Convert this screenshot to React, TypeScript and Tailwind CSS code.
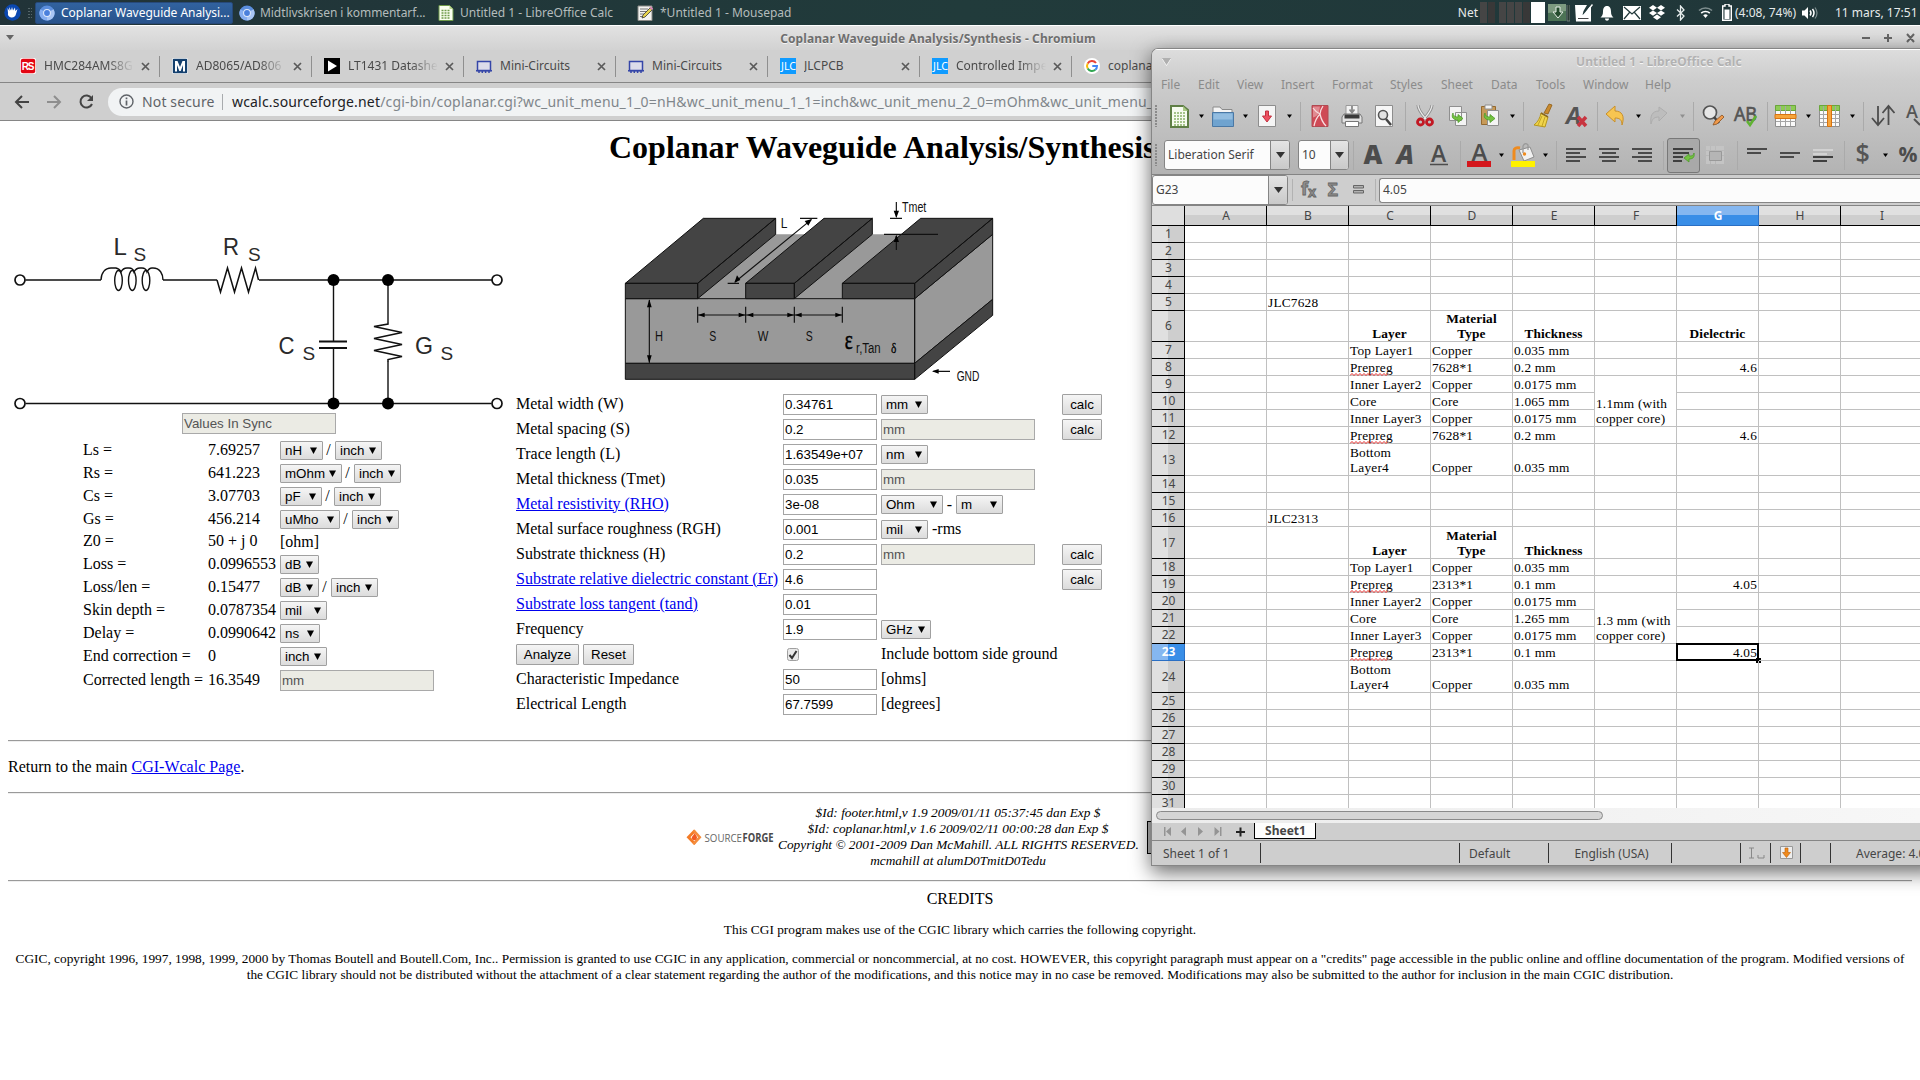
import React from "react";

const UI = "font-['Noto_Sans',sans-serif]";

/* ---------- top panel ---------- */

function ChromiumIcon() {
  return (
    <svg width="16" height="16" viewBox="0 0 16 16" className="shrink-0">
      <circle cx="8" cy="8" r="7.6" fill="#5b8ede" />
      <path d="M8 8 L14.6 4.2 A7.6 7.6 0 0 1 8 15.6z" fill="#a9c6f5" />
      <path d="M8 8 L1.4 4.2 A7.6 7.6 0 0 0 8 15.6z" fill="#86aef0" />
      <circle cx="8" cy="8" r="3.9" fill="#dfe9fb" />
      <circle cx="8" cy="8" r="2.9" fill="#4a80dc" />
    </svg>
  );
}

function CalcIcon() {
  return (
    <svg width="16" height="16" viewBox="0 0 16 16" className="shrink-0">
      <path d="M1 .5h10.500L15 4v11.500H1z" fill="#fafff0" stroke="#6f9a4a" />
      <path d="M11.500 .5V4H15z" fill="#b7d48e" />
      <path d="M3.500 5.500h9M3.500 8h9M3.500 10.500h9M3.500 13h9" stroke="#6f9a4a" strokeWidth="1.300" strokeDasharray="2 1" />
    </svg>
  );
}

function TopPanel() {
  return (
    <div className="flex h-[25px] items-center bg-gradient-to-r from-[#213338] via-[#213b3b] to-[#203639] text-[12px] text-[#b4bcbc]">
      <svg width="17" height="17" viewBox="0 0 17 17" className="ml-[4px] shrink-0">
        <circle cx="8.500" cy="8.500" r="8.200" fill="#0a47b0" />
        <path d="M3.500 4l2 3-.500-4 2 3.500L8 3l1 3.500 2-3 .300 3.500L13.500 5l-1.500 5c-.500 2.500-2.500 4-5 3.500C4.500 13 3.500 11 4 9z" fill="#fff" />
      </svg>
      <div className="ml-[7px] grid w-[4px] shrink-0 grid-cols-2 gap-x-px gap-y-[2px]">
        {[0, 1, 2, 3, 4, 5, 6, 7].map((i) => (
          <span key={i} className="h-px bg-[#55666a]" />
        ))}
      </div>
      <div className="ml-[3px] flex h-[22px] w-[198px] shrink-0 items-center rounded-[2px] border border-[#27497a] bg-gradient-to-b from-[#31629f] to-[#28538c] pl-[3px] text-white">
        <ChromiumIcon />
        <span className="ml-[6px] tracking-[-0.03px] whitespace-nowrap">Coplanar Waveguide Analysi...</span>
      </div>
      <div className="flex w-[199px] shrink-0 items-center pl-[6px]">
        <ChromiumIcon />
        <span className="ml-[5px] tracking-[-0.06px] whitespace-nowrap">Midtlivskrisen i kommentarf...</span>
      </div>
      <div className="flex w-[199px] shrink-0 items-center pl-[6px]">
        <CalcIcon />
        <span className="ml-[6px] whitespace-nowrap">Untitled 1 - LibreOffice Calc</span>
      </div>
      <div className="flex w-[200px] shrink-0 items-center pl-[6px]">
        <svg width="16" height="16" viewBox="0 0 16 16" className="shrink-0">
          <path d="M1 1h14v14.500H1z" fill="#f3f3f0" stroke="#8a8a86" />
          <path d="M3 4h8M3 6.500h9M3 9h5M3 11.500h4" stroke="#777" />
          <path d="M13 3l2 2-7 7-3 1 1-3z" fill="#e7d44c" stroke="#333" strokeWidth=".8" />
          <path d="M13 2l2.500 2.500" stroke="#d78ab0" strokeWidth="2" />
        </svg>
        <span className="ml-[7px] whitespace-nowrap">*Untitled 1 - Mousepad</span>
      </div>
      <div className="ml-auto flex h-full items-center text-[#e6eaea]">
        <span>Net</span>
        <div className="ml-[2px] flex h-[21px] items-stretch gap-px">
          <span className="w-[7px] bg-[#454545]" />
          <span className="w-[7px] bg-[#383838]" />
          <span className="ml-[3px] w-[7px] bg-[#454545]" />
          <span className="w-[7px] bg-[#454545]" />
          <span className="w-[7px] bg-[#454545]" />
          <span className="w-[7px] bg-[#383838]" />
          <span className="w-[14px] bg-white" />
        </div>
        <svg width="22" height="18" viewBox="0 0 22 18" className="ml-[3px]">
          <path d="M0 0h18v17H0z" fill="#4c7355" />
          <path d="M0 0h18v7L0 9z" fill="#7d9a80" />
          <path d="M8 3h4v5h3l-5 6-5-6h3z" fill="#234b2c" stroke="#e7efe7" />
          <path d="M19 1v16h3V1" fill="#2a3c36" stroke="#8a958f" strokeWidth=".7" />
        </svg>
        <svg width="18" height="18" viewBox="0 0 18 18" className="ml-[5px]">
          <path d="M0 1h12L8.500 7l-1 4 3-2 4-6H16v14.500H1z" fill="#fff" />
          <path d="M17.500 .5L9 11" stroke="#fff" strokeWidth="1.500" />
          <path d="M3 14.500h10.500" stroke="#444" />
        </svg>
        <svg width="14" height="16" viewBox="0 0 14 16" className="ml-[7px]">
          <path d="M7 1c3 0 4 2.500 4 5.500 0 3.500 1 4.500 2.500 6H.5C2 11 3 10 3 6.500 3 3.500 4 1 7 1zM5 13.500h4c0 3-4 3-4 0z" fill="#fff" />
        </svg>
        <svg width="18" height="14" viewBox="0 0 18 14" className="ml-[9px]">
          <path d="M0 0h18v14H0z" fill="#fff" />
          <path d="M1 1l8 7 8-7M1 13l5.500-6.500M17 13l-5.500-6.500" stroke="#22393b" strokeWidth="1.200" fill="none" />
        </svg>
        <svg width="18" height="16" viewBox="0 0 18 16" className="ml-[7px]">
          <path d="M5 0l4 2.700-4 2.700L1 2.700zM13 0l4 2.700-4 2.700-4-2.700zM5 5.400L9 8l-4 2.700L1 8zM13 5.400L17 8l-4 2.700L9 8zM9 9.500l4 2.700L9 15l-4-2.800z" fill="#fff" />
        </svg>
        <svg width="10" height="16" viewBox="0 0 10 16" className="ml-[10px]">
          <path d="M1 4.500l7 6.500-3.500 4V1L8 5l-7 6.500" stroke="#e8eeee" strokeWidth="1.300" fill="none" />
        </svg>
        <svg width="15" height="13" viewBox="0 0 15 13" className="ml-[12px]">
          <path d="M1 4.500a9.500 9.500 0 0 1 13 0" stroke="#7e8d8e" strokeWidth="1.600" fill="none" />
          <path d="M3.200 7.200a6.300 6.300 0 0 1 8.600 0" stroke="#fff" strokeWidth="1.600" fill="none" />
          <path d="M5.200 9.300a3.400 3.400 0 0 1 4.600 0L7.500 12z" fill="#fff" />
        </svg>
        <svg width="10" height="17" viewBox="0 0 10 17" className="ml-[9px]">
          <path d="M3 0h4v2h2.300v14.300H.7V2H3z" fill="none" stroke="#fff" strokeWidth="1.400" />
          <path d="M2.500 5.500h5v9.500h-5z" fill="#fff" />
        </svg>
        <span className="ml-[3px] w-[62px] whitespace-nowrap">(4:08, 74%)</span>
        <svg width="17" height="14" viewBox="0 0 17 14" className="ml-[5px]">
          <path d="M0 4.500h2.500L6 1v12L2.500 9.500H0z" fill="#fff" />
          <path d="M8 4.500q2 2.500 0 5" stroke="#fff" fill="none" strokeWidth="1.500" />
          <path d="M10.500 3q3 4 0 8" stroke="#fff" fill="none" strokeWidth="1.500" />
          <path d="M13 1.500q4 5.500 0 11" stroke="#7d8d8e" fill="none" strokeWidth="1.200" />
        </svg>
        <span className="mr-[4px] ml-[16px] w-[81px] whitespace-nowrap">11 mars, 17:51</span>
      </div>
    </div>
  );
}

/* ---------- browser chrome ---------- */

const miniIcon = (
  <svg width="16" height="16" viewBox="0 0 16 16">
    <path d="M1.500 3.500h13v9h-13z" fill="#dcdcea" stroke="#3546a8" strokeWidth="1.500" />
    <path d="M0 12.700h16M3 13v2M6.300 13v2M9.600 13v2M13 13v2" stroke="#3546a8" strokeWidth="1.500" />
  </svg>
);

const jlcIcon = (
  <svg width="16" height="16" viewBox="0 0 16 16">
    <path d="M0 0h16v16H0z" fill="#0f9bff" />
    <text x="1" y="12" fontSize="10" fill="#fff" fontFamily="Noto Sans" textLength="15" lengthAdjust="spacingAndGlyphs">JLC</text>
  </svg>
);

const tabs: { title: string; fade?: boolean; icon: React.ReactNode }[] = [
  {
    title: "HMC284AMS8G",
    fade: true,
    icon: (
      <svg width="16" height="16" viewBox="0 0 16 16">
        <rect width="16" height="16" rx="2" fill="#fff" />
        <rect x=".8" y=".8" width="14.400" height="14.400" rx="2" fill="#e30613" />
        <text x="1.800" y="12" fontSize="10" fontWeight="700" fill="#fff" fontFamily="Liberation Sans" textLength="12.500">RS</text>
      </svg>
    ),
  },
  {
    title: "AD8065/AD806",
    fade: true,
    icon: (
      <svg width="16" height="16" viewBox="0 0 16 16">
        <rect width="16" height="16" rx="2" fill="#fff" />
        <rect x=".8" y=".8" width="14.400" height="14.400" rx="1" fill="#14406e" />
        <path d="M3 3h2.500L8 9l2.500-6H13v10.500h-2V7l-2.300 6H7.300L5 7v6.500H3z" fill="#fff" />
      </svg>
    ),
  },
  {
    title: "LT1431 Datashe",
    fade: true,
    icon: (
      <svg width="16" height="16" viewBox="0 0 16 16">
        <path d="M0 0h16v16H0z" />
        <path d="M4 2.500L13 8l-9 5.500z" fill="#fff" />
      </svg>
    ),
  },
  { title: "Mini-Circuits", icon: miniIcon },
  { title: "Mini-Circuits", icon: miniIcon },
  { title: "JLCPCB", icon: jlcIcon },
  { title: "Controlled Impe", fade: true, icon: jlcIcon },
  {
    title: "coplanar",
    icon: (
      <svg width="16" height="16" viewBox="0 0 16 16">
        <circle cx="8" cy="8" r="8" fill="#fff" />
        <path d="M12 5A5 5 0 0 0 3.700 5.500" stroke="#ea4335" strokeWidth="2" fill="none" />
        <path d="M3.700 5.500a5 5 0 0 0 0 5" stroke="#fbbc05" strokeWidth="2" fill="none" />
        <path d="M3.700 10.500a5 5 0 0 0 7.600 1.300" stroke="#34a853" strokeWidth="2" fill="none" />
        <path d="M11.300 11.800A5 5 0 0 0 13 8H8.300" stroke="#4285f4" strokeWidth="2" fill="none" />
      </svg>
    ),
  },
];

function BrowserChrome() {
  return (
    <div className="text-[#4a4a4a]">
      <div className="flex h-[25px] items-center border-t border-white bg-gradient-to-b from-[#e2e2e2] to-[#d2d2d2]">
        <div className="w-[16px] pl-[6px]">
          <svg width="8" height="6" viewBox="0 0 8 6">
            <path d="M0 0h8L4 5z" fill="#666" />
          </svg>
        </div>
        <span className="flex-1 pt-px text-center text-[12px] font-bold tracking-[0.1px] text-[#6e6e6e] [text-shadow:0_1px_0_#f4f4f4]">Coplanar Waveguide Analysis/Synthesis - Chromium</span>
        <svg width="56" height="12" viewBox="0 0 56 12" className="mr-[4px]" stroke="#666" strokeWidth="2">
          <path d="M2 6h8M24 6h8M28 2v8M47 2l7 8M54 2l-7 8" />
        </svg>
      </div>
      <div className="flex h-[32px] items-center overflow-hidden bg-[#d0d0d0] pl-[8px]">
        {tabs.map((t, i) => (
          <div key={i} className="flex h-full w-[152px] shrink-0 items-center pl-[12px]">
            <span className="w-[24px] shrink-0">{t.icon}</span>
            <span
              className={
                t.fade
                  ? "w-[90px] overflow-hidden text-[12px] whitespace-nowrap [mask-image:linear-gradient(to_right,#000_70%,transparent)]"
                  : "w-[90px] overflow-hidden text-[12px] whitespace-nowrap"
              }
            >
              {t.title}
            </span>
            <svg width="9" height="9" viewBox="0 0 9 9" className="ml-[7px]" stroke="#5a5a5a" strokeWidth="1.700">
              <path d="M1 1l7 7M8 1l-7 7" />
            </svg>
            <span className="ml-auto h-[21px] w-px bg-[#8f8f8f]" />
          </div>
        ))}
      </div>
      <div className="flex h-[39px] items-center border-y border-[#868686] bg-[#cfcfcf]">
        <svg width="98" height="16" viewBox="0 0 98 16" className="ml-[10px] shrink-0" fill="none" strokeWidth="2">
          <path d="M19 8H6M12 2L6 8l6 6" stroke="#444" />
          <path d="M37 8h13M44 2l6 6-6 6" stroke="#8e8e8e" />
          <path d="M81.500 4.200A6 6 0 1 0 82 10" stroke="#444" />
          <path d="M83 1v6h-6z" fill="#444" />
        </svg>
        <div className="flex h-[28px] w-[1700px] shrink-0 items-center rounded-full bg-[#f1f3f4] pl-[11px]">
          <svg width="15" height="15" viewBox="0 0 15 15" fill="none" stroke="#5f6368">
            <circle cx="7.500" cy="7.500" r="6.500" strokeWidth="1.400" />
            <path d="M7.500 3.500v1.700M7.500 6.500v5" strokeWidth="1.700" />
          </svg>
          <span className="ml-[8px] w-[72px] text-[14px] tracking-[0.14px] whitespace-nowrap text-[#5f6368]">Not secure</span>
          <span className="ml-[8px] h-[16px] w-px bg-[#a8abae]" />
          <span className="ml-[9px] text-[14px] tracking-[0.18px] whitespace-nowrap text-[#80868b]">
            <span className="text-[#202124]">wcalc.sourceforge.net</span>
            /cgi-bin/coplanar.cgi?wc_unit_menu_1_0=nH&amp;wc_unit_menu_1_1=inch&amp;wc_unit_menu_2_0=mOhm&amp;wc_unit_menu_2_1=inch
          </span>
        </div>
      </div>
    </div>
  );
}

/* ---------- web page ---------- */

const control = "font-['Liberation_Sans',sans-serif] text-[13.333px]";

function Select({ label, w }: { label: string; w: string }) {
  return (
    <button className={`flex h-[19px] shrink-0 items-center justify-between rounded-[1px] border border-[#a0a0a0] bg-gradient-to-b from-[#f5f5f5] to-[#dcdcdc] pr-[5px] pl-[4px] leading-none text-black ${control} ${w}`}>
      <span>{label}</span>
      <svg width="7" height="7" viewBox="0 0 7 7" className="-mt-px">
        <path d="M0 .5h7L3.500 7z" />
      </svg>
    </button>
  );
}

function Disabled({ value }: { value: string }) {
  return <div className={`flex h-[21px] w-[154px] shrink-0 items-center border border-[#a9a9a9] bg-[#ebebe4] pl-[1px] leading-none text-[#545454] ${control}`}>{value}</div>;
}

function Button({ label, w }: { label: string; w: string }) {
  return <button className={`flex h-[21px] shrink-0 items-center justify-center rounded-[1px] border border-[#a0a0a0] bg-gradient-to-b from-[#f5f5f5] to-[#dcdcdc] leading-none text-black ${control} ${w}`}>{label}</button>;
}

const results: { name: string; value: string; units: React.ReactNode; h?: string }[] = [
  { name: "Ls =", value: "7.69257", units: <><Select label="nH" w="w-[43px]" /><Slash /><Select label="inch" w="w-[47px]" /></> },
  { name: "Rs =", value: "641.223", units: <><Select label="mOhm" w="w-[62px]" /><Slash /><Select label="inch" w="w-[47px]" /></> },
  { name: "Cs =", value: "3.07703", units: <><Select label="pF" w="w-[42px]" /><Slash /><Select label="inch" w="w-[47px]" /></> },
  { name: "Gs =", value: "456.214", units: <><Select label="uMho" w="w-[60px]" /><Slash /><Select label="inch" w="w-[47px]" /></> },
  { name: "Z0 =", value: "50 + j 0", units: <span className="-mt-px">[ohm]</span>, h: "h-[22px]" },
  { name: "Loss =", value: "0.0996553", units: <Select label="dB" w="w-[39px]" /> },
  { name: "Loss/len =", value: "0.15477", units: <><Select label="dB" w="w-[39px]" /><Slash /><Select label="inch" w="w-[47px]" /></> },
  { name: "Skin depth =", value: "0.0787354", units: <Select label="mil" w="w-[47px]" /> },
  { name: "Delay =", value: "0.0990642", units: <Select label="ns" w="w-[40px]" /> },
  { name: "End correction =", value: "0", units: <Select label="inch" w="w-[47px]" /> },
  { name: "Corrected length =", value: "16.3549", units: <Disabled value="mm" />, h: "h-[25px]" },
];

function Slash() {
  return <span className="-mt-[2px] w-[12px] pr-px text-center">/</span>;
}

const mm = (
  <div className="w-[154px]">
    <Disabled value="mm" />
  </div>
);

const params: { name: string; link?: boolean; value: string; unit?: React.ReactNode; calc?: boolean }[] = [
  { name: "Metal width (W)", value: "0.34761", unit: <Select label="mm" w="w-[47px]" />, calc: true },
  { name: "Metal spacing (S)", value: "0.2", unit: mm, calc: true },
  { name: "Trace length (L)", value: "1.63549e+07", unit: <Select label="nm" w="w-[47px]" /> },
  { name: "Metal thickness (Tmet)", value: "0.035", unit: mm },
  { name: "Metal resistivity (RHO)", link: true, value: "3e-08", unit: <><Select label="Ohm" w="w-[62px]" /><span className="w-[13px] text-center">-</span><Select label="m" w="w-[47px]" /></> },
  { name: "Metal surface roughness (RGH)", value: "0.001", unit: <><Select label="mil" w="w-[47px]" /><span className="-mt-px ml-[4px]">-rms</span></> },
  { name: "Substrate thickness (H)", value: "0.2", unit: mm, calc: true },
  { name: "Substrate relative dielectric constant (Er)", link: true, value: "4.6", calc: true },
  { name: "Substrate loss tangent (tand)", link: true, value: "0.01" },
  { name: "Frequency", value: "1.9", unit: <Select label="GHz" w="w-[50px]" /> },
  { name: "", value: "" },
  { name: "Characteristic Impedance", value: "50", unit: <span className="-mt-px">[ohms]</span> },
  { name: "Electrical Length", value: "67.7599", unit: <span className="-mt-px">[degrees]</span> },
];

function Circuit() {
  const t = { fontFamily: "Liberation Sans", fill: "#2a2a2a", stroke: "none" };
  return (
    <svg width="516" height="182" viewBox="0 230 516 182" fill="none" stroke="#111" strokeWidth="1.400">
      <path d="M25.500 280H101M163 280h54M259 280h233M25.500 403.500h466M333.500 280v61.500M333.500 348v55.500M388 280v42M388 361v42.500" />
      <path d="M319 341.500h28M319 348h28" strokeWidth="1.800" />
      <path d="M101 280c0-7 4-12 10-12h5q4 1 5 4 2-4 6-4h2q4 0 5 4 2-4 6-4h2q4 0 5 4 2-4 5-4h1c7 0 10 6 10 12" />
      <ellipse cx="118.500" cy="280.500" rx="3.800" ry="10" />
      <ellipse cx="132.300" cy="280.500" rx="3.800" ry="10" />
      <ellipse cx="146" cy="280.500" rx="3.800" ry="10" />
      <path d="M217 280l3.500 12 7-24 7 24 7-24 7 24 7-24 3 12" strokeWidth="1.500" />
      <path d="M388 322v2l-14 2.500 28 6-28 6 28 6-28 6 28 6-14 3v2" strokeWidth="1.500" />
      <g fill="#fff" strokeWidth="1.700">
        <circle cx="20" cy="280" r="5" />
        <circle cx="497" cy="280" r="5" />
        <circle cx="20" cy="403.500" r="5" />
        <circle cx="497" cy="403.500" r="5" />
      </g>
      <g fill="#000" stroke="none">
        <circle cx="333.500" cy="280" r="6" />
        <circle cx="388" cy="280" r="6" />
        <circle cx="333.500" cy="403.500" r="6" />
        <circle cx="388" cy="403.500" r="6" />
      </g>
      <g fontSize="24" {...t}>
        <text x="113.500" y="255">L</text>
        <text x="223" y="255" textLength="16" lengthAdjust="spacingAndGlyphs">R</text>
        <text x="278.500" y="353.500" textLength="16" lengthAdjust="spacingAndGlyphs">C</text>
        <text x="415" y="353.500" textLength="18" lengthAdjust="spacingAndGlyphs">G</text>
      </g>
      <g fontSize="19" {...t}>
        <text x="133.500" y="260.500">S</text>
        <text x="248" y="260.500">S</text>
        <text x="302.500" y="359.500">S</text>
        <text x="440.500" y="359.500">S</text>
      </g>
    </svg>
  );
}

function Label({ x, y, w, size = 44, children }: { x: number; y: number; w: number; size?: number; children: string }) {
  return (
    <text x={x} y={y} fontSize={size} textLength={w} lengthAdjust="spacingAndGlyphs" fontFamily="Liberation Sans" fill="#111" stroke="none">
      {children}
    </text>
  );
}

function Waveguide() {
  return (
    <svg width="420" height="198" viewBox="0 30 1260 594" stroke="#111" strokeWidth="3" strokeLinejoin="round">
      <g fill="#999">
        <path d="M76 356L310 163H1178L944 356z" stroke="none" />
        <path d="M76 356H944V550H76zM944 356L1178 163V358L944 550z" />
      </g>
      <g fill="#444">
        <path d="M76 550H944V598H76zM944 550L1178 358V406L944 598z" />
        <path d="M76 310L310 115H527L293 310zM76 310H293V356H76zM293 310L527 115V163L293 356z" />
        <path d="M437 310L672 115H817L583 310zM437 310H583V356H437zM583 310L817 115V163L583 356z" />
        <path d="M727 310L962 115H1178L944 310zM727 310H944V356H727zM944 310L1178 115V163L944 356z" />
      </g>
      <path d="M148 360V548M293 380V428M437 380V428M583 380V428M727 380V428M295 405H725M383 310H417M600 115H652M405 306L634 119M889 66V110M870 115H906M852 163H1014M889 168V210M1050 574H1000" fill="none" strokeWidth="3.500" />
      <g fill="#000" stroke="none">
        <path d="M148 358l-7 24h14zM148 550l-7-24h14zM294 405l20-7v14zM436 405l-20-7v14zM440 405l20-7v14zM582 405l-20-7v14zM585 405l20-7v14zM726 405l-20-7v14z" />
        <path d="M403 308l8-22 10 14zM636 117l-22 6 11 14zM889 114l-8-22h16zM889 164l-8 22h16zM996 574l20-7v14z" />
      </g>
      <Label x={542} y={145} w={20}>L</Label>
      <Label x={906} y={96} w={73}>Tmet</Label>
      <Label x={165} y={483} w={24}>H</Label>
      <Label x={328} y={483} w={21}>S</Label>
      <Label x={473} y={483} w={32}>W</Label>
      <Label x={617} y={483} w={21}>S</Label>
      <text x="734" y="506" fontSize="80" textLength="24" lengthAdjust="spacingAndGlyphs" fontFamily="Liberation Serif" fill="#000" stroke="#000" strokeWidth="1.500">ε</text>
      <Label x={768} y={518} w={74}>r,Tan</Label>
      <text x="873" y="520" fontSize="42" textLength="16" lengthAdjust="spacingAndGlyphs" fontFamily="Liberation Serif" fill="#000" stroke="#000" strokeWidth=".8">δ</text>
      <Label x={1070} y={602} w={68}>GND</Label>
    </svg>
  );
}

function Rule() {
  return <div className="mx-[8px] h-[2px] border-t border-b border-t-[#9a9a9a] border-b-[#eeeeee]" />;
}

function Page() {
  return (
    <div className="font-['Liberation_Serif',serif] text-[16px] leading-[18px] text-black">
      <h1 className="flex h-[52px] items-center pl-[609px] text-[32px] leading-none font-bold whitespace-nowrap">Coplanar Waveguide Analysis/Synthesis</h1>
      <div className="mt-[3px] flex h-[564px]">
        <div className="w-[516px] pt-[54px]">
          <Circuit />
          <div className="mt-[1px] mb-[5px] ml-[182px]">
            <Disabled value="Values In Sync" />
          </div>
          {results.map((r) => (
            <div key={r.name} className={`flex items-center whitespace-nowrap ${r.h ?? "h-[23px]"}`}>
              <span className="-mt-[2px] ml-[83px] w-[125px]">{r.name}</span>
              <span className="-mt-[2px] w-[72px]">{r.value}</span>
              <div className="flex items-center">{r.units}</div>
            </div>
          ))}
        </div>
        <div className="pt-[14px]">
          <div className="ml-[84px] h-[202px]">
            <Waveguide />
          </div>
          {params.map((p) =>
            p.name ? (
              <div key={p.name} className="flex h-[25px] w-[586px] items-center whitespace-nowrap">
                <span className={p.link ? "-mt-[2px] w-[267px] text-[#0000ee] underline" : "-mt-[2px] w-[267px]"}>{p.name}</span>
                <div className={`flex h-[21px] w-[94px] items-center border border-[#a4a4a4] bg-white pl-[1px] leading-none ${control}`}>{p.value}</div>
                <div className="ml-[4px] flex items-center">{p.unit}</div>
                {p.calc && (
                  <div className="ml-auto">
                    <Button label="calc" w="w-[40px]" />
                  </div>
                )}
              </div>
            ) : (
              <div key="actions" className="flex h-[25px] items-center whitespace-nowrap">
                <Button label="Analyze" w="w-[63px]" />
                <div className="w-[4px]" />
                <Button label="Reset" w="w-[51px]" />
                <svg width="12" height="13" viewBox="0 0 12 13" className="ml-[153px]">
                  <rect x=".5" y=".5" width="11" height="12" rx="2" fill="#e9e9e9" stroke="#a0a0a0" />
                  <path d="M2.500 7l2.500 3 4.500-7" fill="none" stroke="#333" strokeWidth="2" />
                </svg>
                <span className="-mt-[2px] ml-[82px]">Include bottom side ground</span>
              </div>
            ),
          )}
        </div>
      </div>
      <Rule />
      <p className="flex h-[50px] items-center pl-[8px]">
        Return to the main&nbsp;<span className="text-[#0000ee] underline">CGI-Wcalc Page</span>.
      </p>
      <Rule />
      <div className="flex h-[86px] items-center justify-center text-[13.333px] leading-[16px] italic">
        <div className="flex w-[92px] items-center not-italic">
          <svg width="88" height="17" viewBox="0 0 88 17">
            <path d="M8 .5L.5 8.300 8 16l2-2-5.500-5.700L10 2.500z" fill="#f47b26" />
            <path d="M8.500 .5l7 7.800-7 7.700-2-2 5.500-5.700L7 2.500z" fill="#f58d3d" />
            <path d="M8.500 4c2 2.500 2.500 3.500 2.500 5a2.700 2.700 0 0 1-5.300 0C5.700 7 8 6.500 8.500 4z" fill="#f15a22" />
            <text x="18.500" y="12.600" fontSize="11.500" fontFamily="Open Sans" fill="#666" textLength="37.500" lengthAdjust="spacingAndGlyphs">SOURCE</text>
            <text x="56.500" y="12.600" fontSize="11.500" fontWeight="700" fontFamily="Open Sans" fill="#4a4a4a" textLength="31" lengthAdjust="spacingAndGlyphs">FORGE</text>
          </svg>
        </div>
        <div className="w-[360px] text-center whitespace-nowrap">
          <p>$Id: footer.html,v 1.9 2009/01/11 05:37:45 dan Exp $</p>
          <p>$Id: coplanar.html,v 1.6 2009/02/11 00:00:28 dan Exp $</p>
          <p>Copyright © 2001-2009 Dan McMahill. ALL RIGHTS RESERVED.</p>
          <p>mcmahill at alumD0TmitD0Tedu</p>
        </div>
        <div className="ml-[9px] h-[33px] w-[87px] border border-black bg-[#bbb]" />
      </div>
      <Rule />
      <div className="px-[8px] text-center text-[13.333px] leading-[16px]">
        <p className="pt-[8px] text-[16px] leading-[18px]">CREDITS</p>
        <p className="pt-[14px]">This CGI program makes use of the CGIC library which carries the following copyright.</p>
        <p className="pt-[13px]">
          CGIC, copyright 1996, 1997, 1998, 1999, 2000 by Thomas Boutell and Boutell.Com, Inc.. Permission is granted to use CGIC in any application, commercial or noncommercial, at no cost. HOWEVER, this copyright paragraph must appear on a "credits" page accessible in the public online and offline documentation of the program. Modified versions of the CGIC library should not be distributed without the attachment of a clear statement regarding the author of the modifications, and this notice may in no case be removed. Modifications may also be submitted to the author for inclusion in the main CGIC distribution.
        </p>
      </div>
    </div>
  );
}

/* ---------- spreadsheet window ---------- */

function Ico({ ml, children }: { ml: string; children: React.ReactNode }) {
  return (
    <svg width="24" height="24" viewBox="0 0 24 24" fill="none" className={`shrink-0 overflow-visible ${ml}`}>
      {children}
    </svg>
  );
}

function Arrow({ ml, dim }: { ml: string; dim?: boolean }) {
  return (
    <svg width="7" height="5" viewBox="0 0 7 5" className={`shrink-0 ${ml}`}>
      <path d="M1 0.500h5L3.500 4z" fill={dim ? "#8f8f8f" : "#000"} />
    </svg>
  );
}

function Sep({ ml }: { ml: string }) {
  return <span className={`h-[29px] w-px shrink-0 bg-[#aaaaaa] ${ml}`} />;
}

function Handle() {
  return <span className="ml-[3px] h-[22px] w-[2px] shrink-0 bg-[repeating-linear-gradient(to_bottom,#8a8a8a_0_2px,transparent_2px_3px)]" />;
}

const green = "#4e9a2a";

function ToolbarOne() {
  return (
    <div className="flex h-[40px] items-center overflow-hidden">
      <Handle />
      <Ico ml="ml-[10px]">
        <path d="M4 2h12l5 4v17H4z" fill="#f6fbef" stroke="#5f7f45" strokeWidth="2" />
        <path d="M16 2v5h5z" fill="#a8c884" />
        <path d="M7 9h12M7 12h12M7 15h12M7 18h12M7 21h12" stroke="#8ab36a" strokeWidth="1.300" strokeDasharray="2 1" />
      </Ico>
      <Arrow ml="ml-[7px]" />
      <Ico ml="ml-[6px]">
        <path d="M2 20V3h7l2 2.500h10V10" fill="#f4f4f4" stroke="#8b8b8b" />
        <path d="M1.500 8.500h21v14h-21z" fill="#6fa3cf" stroke="#4a78a5" />
        <path d="M2.500 9.500h19v6h-19z" fill="#93bde0" />
      </Ico>
      <Arrow ml="ml-[7px]" />
      <Ico ml="ml-[6px]">
        <path d="M3.500 1.500h17v21h-17z" fill="#f5f5f5" stroke="#8d8d8d" />
        <path d="M10.500 7h3v5h3l-4.500 6-4.500-6h3z" fill="#ec5060" stroke="#c2303f" />
      </Ico>
      <Arrow ml="ml-[7px]" />
      <Sep ml="ml-[7px]" />
      <Ico ml="ml-[7px]">
        <path d="M4 1.500h16v21H4z" fill="#cf4a56" stroke="#b04a52" />
        <path d="M5 2.500h7c-1 8-3 10-7 11z" fill="#e08a91" />
        <path d="M5 4c2 3 5 5 7 6 0-3 1-5 3-8M12 10c-3 3-5 7-6 12M12 10c1 5 3 9 6 12" stroke="#f7dcde" strokeWidth="1.300" />
      </Ico>
      <Ico ml="ml-[8px]">
        <path d="M6 1.500h12v9H6z" fill="#f2f2f2" stroke="#999" />
        <path d="M12 2v5M9.500 5.500l2.500 3 2.500-3" stroke="#888" strokeWidth="1.800" />
        <path d="M4 10h16l2 3v6H2v-6z" fill="#e2e2e2" stroke="#777" />
        <path d="M4.500 10.500h15v4h-15z" fill="#3a3a3a" />
        <path d="M5.500 17.500h13v5h-13z" fill="#fff" stroke="#777" />
      </Ico>
      <Ico ml="ml-[8px]">
        <path d="M3.500 1.500h17v21h-17z" fill="#f6f6f6" stroke="#8d8d8d" />
        <circle cx="11" cy="11" r="4.500" fill="#e3e3e3" stroke="#555" strokeWidth="1.600" />
        <path d="M14 15l5 6" stroke="#444" strokeWidth="2.500" />
      </Ico>
      <Sep ml="ml-[9px]" />
      <Ico ml="ml-[7px]">
        <path d="M5 1c0 5 4 9 8 14M19 1c0 5-4 9-8 14" stroke="#8d8d8d" strokeWidth="3" />
        <path d="M5 1c0 5 4 9 8 14M19 1c0 5-4 9-8 14" stroke="#e8e8e8" strokeWidth="1.300" />
        <circle cx="7.500" cy="18" r="3" stroke="#c21823" strokeWidth="2.800" />
        <circle cx="16.500" cy="18" r="3" stroke="#c21823" strokeWidth="2.800" />
      </Ico>
      <Ico ml="ml-[9px]">
        <path d="M3.500 2.500h12v14h-12zM9.500 8.500h11v13h-11z" fill="#f4f4f4" stroke="#8f8f8f" />
        <path d="M7 9c0 3 2 4 5 4v-2.500l5 4-5 4V16c-5 0-7-3-5-7z" fill="#73c240" stroke={green} strokeWidth=".8" />
      </Ico>
      <Ico ml="ml-[8px]">
        <path d="M3.500 2.500h14v18h-14z" fill="#c79a58" stroke="#94692f" />
        <path d="M7 1h7v4H7zM9.500 6.500h11v15h-11z" fill="#f4f4f4" stroke="#8f8f8f" />
        <path d="M7 9c0 3 2 4 5 4v-2.500l5 4-5 4V16c-5 0-7-3-5-7z" fill="#73c240" stroke={green} strokeWidth=".8" />
      </Ico>
      <Arrow ml="ml-[7px]" />
      <Sep ml="ml-[7px]" />
      <Ico ml="ml-[6px]">
        <path d="M19 0l3 1-4 9-4-1z" fill="#c98a2e" stroke="#8e5d15" strokeWidth=".8" />
        <path d="M11 9l7 4-3 10-11-2C8 18 10 14 11 9z" fill="#f0d44b" stroke="#b5961c" />
        <path d="M12 12l-4 9M15 13l-3 9" stroke="#c2a325" />
        <path d="M11 9l7 4" stroke="#8b6a20" strokeWidth="1.500" />
      </Ico>
      <Ico ml="ml-[11px]">
        <text x="1" y="20" fontSize="24" fontWeight="700" fontStyle="italic" fontFamily="Open Sans" fill="#555">A</text>
        <path d="M13 13l8 9M21 13l-8 9" stroke="#c83540" strokeWidth="3.500" />
      </Ico>
      <Sep ml="ml-[8px]" />
      <Ico ml="ml-[5px]">
        <path d="M3 10l9-8v5c7 0 10 5 7 14 0-5-2-7-7-7v4z" fill="#f7c551" stroke="#c9902a" />
      </Ico>
      <Arrow ml="ml-[8px]" />
      <Ico ml="ml-[5px]">
        <path d="M20 9l-8-6v4C5 7 3 12 4 20c1-5 3-7 8-7v4z" fill="#bdbdbd" stroke="#adadad" />
      </Ico>
      <Arrow ml="ml-[8px]" dim />
      <Sep ml="ml-[7px]" />
      <Ico ml="ml-[7px]">
        <circle cx="9" cy="8.500" r="6.500" fill="#e6e6e6" stroke="#555" strokeWidth="1.700" />
        <path d="M13 13l5 6" stroke="#444" strokeWidth="2.500" />
        <path d="M12 21l2-4 7-6 2 2-7 7z" fill="#ef9a4c" stroke="#8a5120" strokeWidth=".8" />
      </Ico>
      <Ico ml="ml-[9px]">
        <text x="0" y="16.500" fontSize="20" fontFamily="Open Sans" stroke="#555" strokeWidth=".7" fill="#555" textLength="23" lengthAdjust="spacingAndGlyphs">AB</text>
        <path d="M13 17l3 4 6-9" stroke="#5fb232" strokeWidth="2.500" />
      </Ico>
      <Sep ml="ml-[9px]" />
      <Ico ml="ml-[5px]">
        <path d="M2.500 1.500h20v21h-20z" fill="#fafafa" stroke="#8f8f8f" />
        <path d="M2.500 1.500h20v5h-20z" fill="#8dcb55" stroke="#6aa63a" />
        <path d="M7.500 2v20M12.500 2v20M17.500 2v20M3 17.500h20" stroke="#a5a5a5" />
        <path d="M2 10.500h21v4H2z" fill="#f6a53c" stroke="#d9730f" />
      </Ico>
      <Arrow ml="ml-[8px]" />
      <Ico ml="ml-[5px]">
        <path d="M2.500 1.500h20v21h-20z" fill="#fafafa" stroke="#8f8f8f" />
        <path d="M2.500 1.500h20v5h-20z" fill="#8dcb55" stroke="#6aa63a" />
        <path d="M6.500 2v20M18.500 2v20M3 10.500h20M3 14.500h20M3 18.500h20" stroke="#a5a5a5" />
        <path d="M10.500 1.500h4v21h-4z" fill="#f6a53c" stroke="#d9730f" />
      </Ico>
      <Arrow ml="ml-[8px]" />
      <Sep ml="ml-[7px]" />
      <Ico ml="ml-[7px]">
        <path d="M7 2v18M1 14l6 7 6-7M17.500 21V3M11.500 9l6-7 6 7" stroke="#4d4d4d" strokeWidth="1.800" />
      </Ico>
      <Ico ml="ml-[11px]">
        <text x="0" y="14" fontSize="18" fontWeight="600" fontFamily="Open Sans" fill="#555">A</text>
        <path d="M8 15l6 6" stroke="#555" strokeWidth="2" />
      </Ico>
    </div>
  );
}

function Combo({ value, cls, arrowW }: { value: string; cls: string; arrowW: string }) {
  return (
    <div className={`flex h-[30px] shrink-0 items-stretch overflow-hidden rounded-[3px] border border-[#858585] bg-[#fcfcfc] ${cls}`}>
      <span className="flex flex-1 items-center pl-[3px]">{value}</span>
      <span className={`flex items-center justify-center border-l border-[#858585] bg-gradient-to-b from-[#e4e4e4] to-[#c9c9c9] ${arrowW}`}>
        <svg width="9" height="6" viewBox="0 0 9 6">
          <path d="M0 0h9L4.500 6z" fill="#333" />
        </svg>
      </span>
    </div>
  );
}

function BoldA({ ml, italic, line }: { ml: string; italic?: boolean; line?: boolean }) {
  return (
    <Ico ml={ml}>
      <text x={line ? 4 : 2.5} y={line ? 19 : 21} fontSize={line ? 23 : 26} fontWeight={line ? 600 : 800} fontStyle={italic ? "italic" : "normal"} fontFamily="Open Sans" fill="#4c4c4c">
        A
      </text>
      {line && <path d="M3 21.500h18" stroke="#4c4c4c" strokeWidth="1.300" />}
    </Ico>
  );
}

function ToolbarTwo() {
  return (
    <div className="flex h-[38px] items-center overflow-hidden">
      <Handle />
      <Combo value="Liberation Serif" cls="ml-[7px] w-[126px]" arrowW="w-[19px]" />
      <Combo value="10" cls="ml-[8px] w-[51px]" arrowW="w-[18px]" />
      <Sep ml="ml-[4px]" />
      <BoldA ml="ml-[7px]" />
      <BoldA ml="ml-[9px]" italic />
      <BoldA ml="ml-[9px]" line />
      <Sep ml="ml-[9px]" />
      <Ico ml="ml-[6px]">
        <text x="4.500" y="18" fontSize="24" fontWeight="600" fontFamily="Open Sans" fill="#4c4c4c">A</text>
        <path d="M0 18h24v6H0z" fill="#d4161c" />
      </Ico>
      <Arrow ml="ml-[7px]" />
      <Ico ml="ml-[6px]">
        <path d="M3 17V8q0-4 6-3" stroke="#ef8b1f" strokeWidth="3" />
        <path d="M8 7l11-3 4 10-10 4z" fill="#f1f1f1" stroke="#8d8d8d" />
        <path d="M12 10V3q2-4 5-1v5" stroke="#9a9a9a" strokeWidth="1.300" />
        <circle cx="13.500" cy="11" r="1.700" fill="#ef8b1f" />
        <path d="M0 18h24v6H0z" fill="#fff200" />
      </Ico>
      <Arrow ml="ml-[7px]" />
      <Sep ml="ml-[7px]" />
      <Ico ml="ml-[7px]">
        <path d="M2 6h20M2 10h14M2 14h20M2 18h14" stroke="#4a4a4a" strokeWidth="1.800" />
      </Ico>
      <Ico ml="ml-[9px]">
        <path d="M2 6h20M5 10h14M2 14h20M5 18h14" stroke="#4a4a4a" strokeWidth="1.800" />
      </Ico>
      <Ico ml="ml-[9px]">
        <path d="M2 6h20M8 10h14M2 14h20M8 18h14" stroke="#4a4a4a" strokeWidth="1.800" />
      </Ico>
      <Sep ml="ml-[9px]" />
      <div className="ml-[3px] flex h-[35px] w-[33px] shrink-0 items-center justify-center rounded-[3px] border border-[#787878] bg-[#a9a9a9]">
        <Ico ml="ml-0">
          <path d="M1 6h20M1 10h16M1 14h10M1 18h9" stroke="#3f3f3f" strokeWidth="1.800" />
          <path d="M22 10c1 5-2 6-5 6v3l-5-4 5-4v2c3 0 4 0 5-3z" fill="#73c240" stroke={green} strokeWidth=".8" />
        </Ico>
      </div>
      <Ico ml="ml-[3px]">
        <path d="M3 5h18M3 19h18M5 3v18M19 3v18" stroke="#c4c4c4" strokeWidth="4" strokeDasharray="4 1" />
        <path d="M6.500 8.500h12v9h-12z" fill="#b5b5b5" stroke="#999" />
      </Ico>
      <Sep ml="ml-[10px]" />
      <Ico ml="ml-[7px]">
        <path d="M2 6h20M2 10h14" stroke="#4a4a4a" strokeWidth="1.800" />
      </Ico>
      <Ico ml="ml-[9px]">
        <path d="M2 10h20M2 14h14" stroke="#4a4a4a" strokeWidth="1.800" />
      </Ico>
      <Ico ml="ml-[9px]">
        <path d="M2 7h20M2 11h14" stroke="#d2d2d2" strokeWidth="1.800" />
        <path d="M2 14h20M2 18h14" stroke="#3f3f3f" strokeWidth="1.800" />
      </Ico>
      <Sep ml="ml-[9px]" />
      <Ico ml="ml-[6px]">
        <text x="4.500" y="19" fontSize="25" fontWeight="600" fontFamily="Open Sans" fill="#555">$</text>
      </Ico>
      <Arrow ml="ml-[7px]" />
      <Ico ml="ml-[7px]">
        <text x="2.500" y="19" fontSize="22" fontWeight="700" fontFamily="Open Sans" fill="#4c4c4c" textLength="19" lengthAdjust="spacingAndGlyphs">%</text>
      </Ico>
    </div>
  );
}

type RowData = { n: number; h?: string; cells?: Record<string, string> };

const rows: RowData[] = [
  { n: 1 }, { n: 2 }, { n: 3 }, { n: 4 },
  { n: 5, cells: { B: "JLC7628" } },
  { n: 6, h: "h-[31px]", cells: { C: "Layer", D: "Material Type", E: "Thickness", G: "Dielectric" } },
  { n: 7, cells: { C: "Top Layer1", D: "Copper", E: "0.035 mm" } },
  { n: 8, cells: { C: "Prepreg", D: "7628*1", E: "0.2 mm", G: "4.6" } },
  { n: 9, cells: { C: "Inner Layer2", D: "Copper", E: "0.0175 mm" } },
  { n: 10, cells: { C: "Core", D: "Core", E: "1.065 mm" } },
  { n: 11, cells: { C: "Inner Layer3", D: "Copper", E: "0.0175 mm", F: "1.1mm (with copper core)" } },
  { n: 12, cells: { C: "Prepreg", D: "7628*1", E: "0.2 mm", G: "4.6" } },
  { n: 13, h: "h-[32px]", cells: { C: "Bottom Layer4", D: "Copper", E: "0.035 mm" } },
  { n: 14 }, { n: 15 },
  { n: 16, cells: { B: "JLC2313" } },
  { n: 17, h: "h-[32px]", cells: { C: "Layer", D: "Material Type", E: "Thickness" } },
  { n: 18, cells: { C: "Top Layer1", D: "Copper", E: "0.035 mm" } },
  { n: 19, cells: { C: "Prepreg", D: "2313*1", E: "0.1 mm", G: "4.05" } },
  { n: 20, cells: { C: "Inner Layer2", D: "Copper", E: "0.0175 mm" } },
  { n: 21, cells: { C: "Core", D: "Core", E: "1.265 mm" } },
  { n: 22, cells: { C: "Inner Layer3", D: "Copper", E: "0.0175 mm", F: "1.3 mm (with copper core)" } },
  { n: 23, cells: { C: "Prepreg", D: "2313*1", E: "0.1 mm", G: "4.05" } },
  { n: 24, h: "h-[32px]", cells: { C: "Bottom Layer4", D: "Copper", E: "0.035 mm" } },
  { n: 25 }, { n: 26 }, { n: 27 }, { n: 28 }, { n: 29 }, { n: 30 }, { n: 31 },
];

const columns = ["A", "B", "C", "D", "E", "F", "G", "H", "I"];
const merged = [9, 10, 20, 21];

function Cell({ col, row }: { col: string; row: RowData }) {
  const text = row.cells?.[col];
  const header = row.n === 6 || row.n === 17;
  const noBottom = col === "F" && merged.includes(row.n);
  const active = col === "G" && row.n === 23;
  return (
    <div
      className={`relative flex w-[82px] shrink-0 items-end border-r border-[#c0c0c0] leading-[15px] ${noBottom ? "" : "border-b"} ${
        header ? "justify-center px-[10px] text-center font-bold tracking-[0.1px]" : col === "G" ? "justify-end pr-[1px]" : "pl-[1px]"
      }`}
    >
      {text === "Prepreg" ? (
        <span className="relative">
          {text}
          <svg width="41" height="3" viewBox="0 0 41 3" className="absolute bottom-[-1px] left-0">
            <path d="M0 2.500l2-2 2 2 2-2 2 2 2-2 2 2 2-2 2 2 2-2 2 2 2-2 2 2 2-2 2 2 2-2 2 2 2-2 2 2 2-2" fill="none" stroke="#e02020" />
          </svg>
        </span>
      ) : (
        text && <span className={text.startsWith("Bottom") || header ? "w-[62px]" : ""}>{text}</span>
      )}
      {active && (
        <div className="pointer-events-none absolute -top-px -right-px -bottom-px -left-px border-2 border-black">
          <span className="absolute -right-[4px] -bottom-[4px] h-[5px] w-[5px] bg-black" />
        </div>
      )}
    </div>
  );
}

function Sheet() {
  return (
    <div className="h-[602px] overflow-hidden bg-white">
      <div className="flex h-[20px]">
        <div className="w-[33px] shrink-0 border-r border-b border-black bg-[#dedede]" />
        {columns.map((c) => (
          <div
            key={c}
            className={
              c === "G"
                ? "flex w-[82px] shrink-0 items-center justify-center border-r border-b border-[#2a6fc4] bg-[linear-gradient(#85b7f0_50%,#398ee7_50%)] pl-px font-bold text-white"
                : "flex w-[82px] shrink-0 items-center justify-center border-r border-b border-black bg-[linear-gradient(#e0e0e0_50%,#cecece_50%)] pl-px"
            }
          >
            {c}
          </div>
        ))}
      </div>
      {rows.map((r) => (
        <div key={r.n} className={`flex ${r.h ?? "h-[17px]"}`}>
          <div
            className={
              r.n === 23
                ? "flex w-[33px] shrink-0 items-center justify-center border-r border-b border-[#2a6fc4] bg-[linear-gradient(to_right,#85b7f0_50%,#398ee7_50%)] pl-px leading-none font-bold text-white"
                : "flex w-[33px] shrink-0 items-center justify-center border-r border-b border-black bg-[linear-gradient(to_right,#e0e0e0_50%,#cecece_50%)] pl-px leading-none"
            }
          >
            {r.n}
          </div>
          <div className="flex font-['Liberation_Serif',serif] text-[13.333px] tracking-[0.2px] text-black">
            {columns.map((c) => (
              <Cell key={c} col={c} row={r} />
            ))}
          </div>
        </div>
      ))}
    </div>
  );
}

const menus: [string, string][] = [
  ["File", "w-[37px]"], ["Edit", "w-[39px]"], ["View", "w-[44px]"], ["Insert", "w-[51px]"], ["Format", "w-[58px]"], ["Styles", "w-[51px]"],
  ["Sheet", "w-[50px]"], ["Data", "w-[45px]"], ["Tools", "w-[47px]"], ["Window", "w-[62px]"], ["Help", "w-[40px]"],
];

function CalcWindow() {
  return (
    <div className="absolute top-[48px] left-[1151px] h-[818px] w-[769px] overflow-hidden rounded-tl-[7px] border-t border-b border-l border-[#868686] bg-[#cecece] text-[12px] text-[#454545]">
      <div className="h-[126px] border-b border-[#848484] bg-gradient-to-b from-[#dddddd] via-[#cdcdcd] via-25% to-[#b3b3b3]">
        <div className="flex h-[25px] items-center border-t border-white">
          <svg width="9" height="8" viewBox="0 0 9 8" className="ml-[10px]">
            <path d="M0 1h9L4.500 8z" fill="#fff" />
            <path d="M0 0h9L4.500 7z" fill="#b0b0b0" />
          </svg>
          <span className="ml-[405px] font-bold tracking-[0.1px] whitespace-nowrap text-[#b2b2b2] [text-shadow:0_1px_0_#f6f6f6]">Untitled 1 - LibreOffice Calc</span>
        </div>
        <div className="flex h-[22px] items-center pl-[9px] text-[#8b8b8b]">
          {menus.map(([m, w]) => (
            <span key={m} className={w}>
              {m}
            </span>
          ))}
        </div>
        <ToolbarOne />
        <ToolbarTwo />
      </div>
      <div className="flex h-[31px] items-center border-b border-[#848484] bg-[#cecece]">
        <Combo value="G23" cls="w-[136px]" arrowW="w-[19px]" />
        <span className="ml-[4px] h-[22px] w-px bg-[#b2b2b2]" />
        <svg width="72" height="24" viewBox="0 0 72 24" fill="#b0b0b0" stroke="#666" className="ml-[4px] shrink-0">
          <g fontFamily="Open Sans" fontWeight="700" strokeWidth=".8" fill="#8e8e8e">
            <text x="4" y="17" fontSize="18">f</text>
            <text x="11" y="18.500" fontSize="14">x</text>
            <text x="30.500" y="18" fontSize="18">Σ</text>
          </g>
          <path d="M56.500 7.500h10v2.500h-10zM56.500 12.500h10v2.500h-10z" />
        </svg>
        <span className="ml-[6px] h-[22px] w-px bg-[#b2b2b2]" />
        <div className="ml-[3px] flex h-[25px] flex-1 items-center rounded-l-[3px] border-y border-l border-[#858585] bg-[#fcfcfc] pl-[3px]">4.05</div>
      </div>
      <Sheet />
      <div className="h-[15px] bg-gradient-to-r from-[#ececec] to-[#f7f7f7] pt-[3px] pl-[4px]">
        <div className="h-[9px] w-[447px] rounded-full border border-[#8a8a8a] bg-[#d5d5d5]" />
      </div>
      <div className="flex h-[17px] items-start">
        <svg width="84" height="16" viewBox="0 0 84 16" className="ml-[10px]">
          <g fill="#949494">
            <path d="M2 4h1.500v9H2zM9 4v9L4 8.500zM24 4v9l-5-4.500zM36 4v9l5-4.500zM52.500 4v9l5-4.500zM58 4h1.500v9H58z" />
          </g>
          <path d="M74 9h9M78.500 4.500v9" stroke="#222" strokeWidth="2" />
        </svg>
        <div className="ml-[8px] flex h-[16px] w-[62px] items-center justify-center border-x border-b border-black bg-[#fdfdfd] pl-px text-[12px] font-bold">Sheet1</div>
      </div>
      <div className="flex h-[25px] items-center border-t border-[#868686] whitespace-nowrap [&>i]:h-[20px] [&>i]:w-px [&>i]:shrink-0 [&>i]:bg-[#333]">
        <span className="w-[108px] shrink-0 pt-px pl-[11px]">Sheet 1 of 1</span>
        <i />
        <span className="w-[198px] shrink-0" />
        <i />
        <span className="w-[88px] shrink-0 pt-px pl-[9px]">Default</span>
        <i />
        <span className="w-[122px] shrink-0 pt-px pl-[3px] text-center">English (USA)</span>
        <i />
        <span className="w-[68px] shrink-0" />
        <i />
        <svg width="29" height="16" viewBox="0 0 29 16" className="shrink-0" fill="none" stroke="#888">
          <path d="M8 3h5M8 13h5M10.500 3v10M17 10v3h6v-3" />
        </svg>
        <i />
        <svg width="29" height="16" viewBox="0 0 29 16" className="shrink-0">
          <path d="M9.500 1.500h12v12h-12z" fill="#eee" stroke="#999" />
          <path d="M14 3h3v4.500h2.500l-4 5-4-5H14z" fill="#f08a1c" stroke="#b85d06" strokeWidth=".6" />
        </svg>
        <i />
        <span className="w-[29px] shrink-0" />
        <i />
        <span className="pt-px pl-[25px]">Average: 4.05; Sum: 4.05</span>
      </div>
    </div>
  );
}

export default function App() {
  return (
    <div className={`relative h-[1080px] w-[1920px] overflow-hidden bg-white ${UI}`}>
      <TopPanel />
      <BrowserChrome />
      <Page />
      <div className="absolute top-[48px] left-[1151px] h-[818px] w-[790px] rounded-tl-[7px] shadow-[0_6px_20px_rgba(0,0,0,0.6)]" />
      <CalcWindow />
    </div>
  );
}
